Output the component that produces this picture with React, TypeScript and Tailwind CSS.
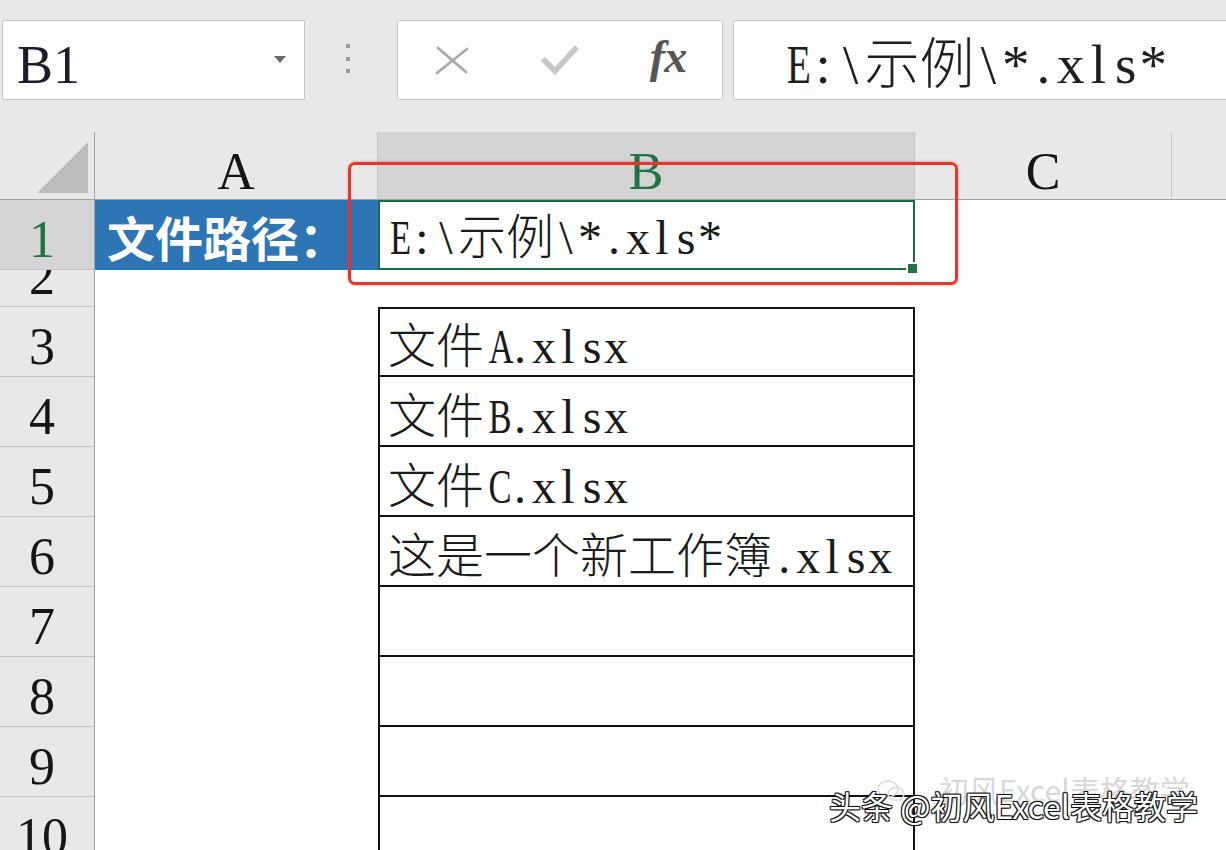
import React, { Fragment } from "react";

// SimSun-like text: ASCII in half-width serif boxes, CJK full width
function Sim({ text }: { text: string }) {
  return (
    <span className="inline-flex items-baseline">
      {Array.from(text).map((c, i) =>
        c.charCodeAt(0) < 128 ? (
          <span key={i} className="inline-block w-[0.5em] text-center font-['Liberation_Serif',serif]">
            {/[A-Z]/.test(c) ? <span className="inline-block scale-x-[0.72]">{c}</span> : c}
          </span>
        ) : (
          <span key={i} className="font-['Noto_Sans_CJK_SC',sans-serif] font-light">
            {c}
          </span>
        )
      )}
    </span>
  );
}

function FormulaBar() {
  return (
    <div className="h-[132px] bg-[#e8e8e8] flex items-start pt-[20px]">
      <div className="ml-[2px] w-[303px] h-[80px] bg-[#fdfdfd] border border-[#c3c3c3] rounded-[2px] flex items-end pl-[14px] pr-[18px] pb-[7px]">
        <span className="text-[54px] leading-none text-[#1c1c2a]">B1</span>
        <svg className="ml-auto mb-[29px]" width="12" height="7" viewBox="0 0 12 7">
          <path d="M0 0H12L6 7Z" fill="#6b6b6b" />
        </svg>
      </div>

      <div className="w-[92px] h-[80px] flex flex-col gap-[8.5px] pl-[41px] pt-[24px]">
        <span className="w-[4px] h-[4px] bg-[#9b9b9b]" />
        <span className="w-[4px] h-[4px] bg-[#9b9b9b]" />
        <span className="w-[4px] h-[4px] bg-[#9b9b9b]" />
      </div>

      <div className="w-[326px] h-[80px] bg-[#fdfdfd] border border-[#c3c3c3] rounded-[2px] grid grid-cols-3 items-center justify-items-center">
        <svg width="34" height="30" viewBox="0 0 34 30">
          <path d="M3 3L31 27M2 28L32 4" stroke="#a8a8a8" strokeWidth="2.6" strokeLinecap="round" fill="none" />
        </svg>
        <svg width="40" height="32" viewBox="0 0 40 32">
          <path d="M3 15L15 27L37 3" stroke="#c6c6c6" strokeWidth="5.5" fill="none" />
        </svg>
        <span className="italic font-bold text-[46px] leading-none text-[#555555] font-['Liberation_Serif',serif] pb-[6px] tracking-[-1px]">fx</span>
      </div>

      <div className="ml-[10px] flex-1 h-[80px] bg-[#fdfdfd] border border-r-0 border-[#c3c3c3] rounded-l-[2px] flex items-end pl-[48px] pb-[7px] text-[55px] leading-none text-[#1e1e1e]">
        <Sim text="E:\示例\*.xls*" />
      </div>
    </div>
  );
}

const bText: Record<number, string> = {
  3: "文件A.xlsx",
  4: "文件B.xlsx",
  5: "文件C.xlsx",
  6: "这是一个新工作簿.xlsx",
};

function Sheet() {
  const rows = [1, 2, 3, 4, 5, 6, 7, 8, 9, 10];
  return (
    <div className="grid grid-cols-[95px_283px_537px_257px_1fr] grid-rows-[68px_70px_37px_repeat(8,70px)] bg-white">
      {/* header row */}
      <div className="bg-[#e8e8e8] border-r border-b border-r-[#a3a3a3] border-b-[#a3a3a3] pt-[10px] pl-[37px]">
        <svg width="52" height="52" viewBox="0 0 52 52">
          <path d="M51 0V51H0Z" fill="#bdbdbd" />
        </svg>
      </div>
      <div className="bg-[#e8e8e8] border-r border-b border-r-[#c6c6c6] border-b-[#a3a3a3] flex items-end justify-center pb-[1px] text-[52px] leading-none text-[#151515]">
        A
      </div>
      <div className="bg-[#d3d3d3] border-r border-b border-r-[#c6c6c6] border-b-[#a3a3a3] flex items-end justify-center pb-[1px] text-[52px] leading-none text-[#217346]">
        B
      </div>
      <div className="bg-[#e8e8e8] border-r border-b border-r-[#c6c6c6] border-b-[#a3a3a3] flex items-end justify-center pb-[1px] text-[52px] leading-none text-[#151515]">
        C
      </div>
      <div className="bg-[#e8e8e8] border-b border-b-[#a3a3a3]" />

      {rows.map((n) => (
        <Fragment key={n}>
          <div
            className={
              n === 1
                ? "bg-[#d5d5d5] border-r border-b border-r-[#a3a3a3] border-b-[#c3c3c3] flex items-end justify-center pr-[10px] pb-[3px] overflow-hidden text-[52px] leading-none text-[#217346]"
                : "bg-[#e8e8e8] border-r border-b border-r-[#a3a3a3] border-b-[#c3c3c3] flex items-end justify-center pr-[10px] pb-[3px] overflow-hidden text-[52px] leading-none text-[#151515]"
            }
          >
            {n}
          </div>

          {n === 1 ? (
            <div className="bg-[#2e75b6] flex items-end pl-[12px] pb-[10px] text-[48px] leading-none text-white font-bold font-['Noto_Sans_CJK_SC',sans-serif] whitespace-nowrap">
              文件路径：
            </div>
          ) : (
            <div />
          )}

          {n === 1 ? (
            <div className="relative border-2 border-[#1f6b40] flex items-end pl-[6px] pb-[6px] text-[48px] leading-none text-[#1a1a1a] whitespace-nowrap">
              <Sim text="E:\示例\*.xls*" />
              <div className="absolute -right-[6px] -bottom-[7px] w-[13px] h-[13px] bg-white p-[2px]">
                <div className="w-full h-full bg-[#217346]" />
              </div>
            </div>
          ) : n >= 3 ? (
            <div
              className={
                n === 3
                  ? "border-2 border-[#111] flex items-end pl-[8px] pb-[4px] text-[48px] leading-none text-[#1a1a1a] whitespace-nowrap"
                  : "border-x-2 border-b-2 border-[#111] flex items-end pl-[8px] pb-[4px] text-[48px] leading-none text-[#1a1a1a] whitespace-nowrap"
              }
            >
              {bText[n] ? <Sim text={bText[n]} /> : null}
            </div>
          ) : (
            <div />
          )}

          <div />
          <div />
        </Fragment>
      ))}
    </div>
  );
}

function Watermark() {
  return (
    <>
      <svg className="absolute left-[876px] top-[779px]" width="30" height="24" viewBox="0 0 30 24">
        <ellipse cx="12" cy="10" rx="10" ry="8" fill="none" stroke="#dadada" strokeWidth="1.5" />
        <ellipse cx="20" cy="15" rx="8" ry="6.5" fill="none" stroke="#dadada" strokeWidth="1.5" />
      </svg>
      <div className="absolute left-[939px] top-[774px] text-[30px] leading-none text-[#d8d8d8] font-['Noto_Sans_CJK_SC',sans-serif] whitespace-nowrap">
        初风Excel表格教学
      </div>
      <div className="absolute left-[829px] top-[789px] text-[32px] leading-none text-white font-['Noto_Sans_CJK_SC',sans-serif] whitespace-nowrap [text-shadow:1px_1px_0_#111,-1px_-1px_0_#111,1px_-1px_0_#111,-1px_1px_0_#111,0_0_2px_#000]">
        头条 @初风Excel表格教学
      </div>
    </>
  );
}

export default function App() {
  return (
    <div className="relative w-[1226px] h-[850px] overflow-hidden bg-white font-['Liberation_Serif',serif]">
      <FormulaBar />
      <Sheet />
      <div className="absolute left-[348px] top-[162px] w-[610px] h-[123px] rounded-[7px] border-[3px] border-[#e8352c] shadow-[0_0_3px_rgba(232,53,44,0.5)]" />
      <Watermark />
    </div>
  );
}
